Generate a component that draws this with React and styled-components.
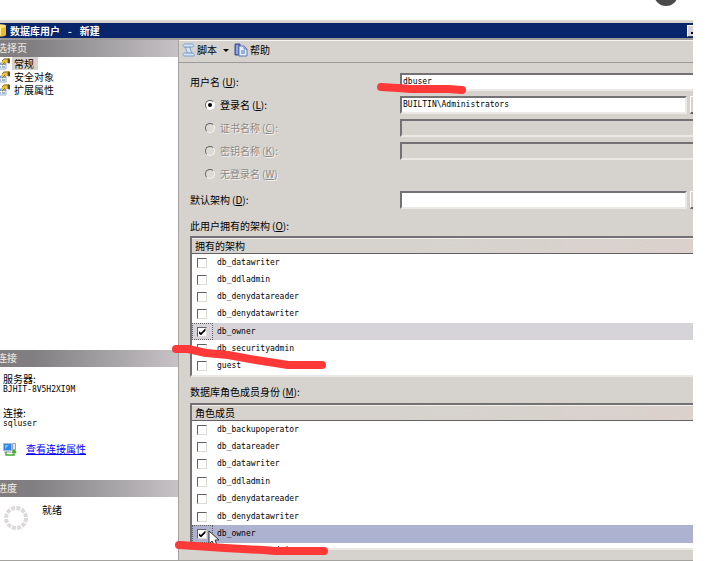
import React from "react";
import styled, { createGlobalStyle } from "styled-components";

const GlobalStyle = createGlobalStyle`
	* {
		box-sizing: border-box;
	}
	body {
		margin: 0;
		background: #fff;
		color: #000;
		font-family: "Noto Sans CJK SC", sans-serif;
		font-size: 10px;
		line-height: 14px;
	}
	input, button {
		margin: 0;
		padding: 0;
		border-radius: 0;
	}
`;

const Page = styled.div`
	position: relative;
	overflow: hidden;
	padding: 20px 16px 0 0;
`;

const Bubble = styled.div`
	position: absolute;
	top: -18px;
	right: 31px;
	width: 24px;
	height: 24px;
	border-radius: 50%;
	background: #4a4a4a;
`;

const Frame = styled.div`
	overflow: hidden;
`;

const Dialog = styled.div`
	margin: 0 -20px 0 -4px;
	background: #d6d3ce;
	border-top: 1px solid #dedcd8;
`;

const TitleBar = styled.header`
	display: flex;
	align-items: center;
	height: 17px;
	margin-top: 2px;
	padding-right: 8px;
	background: #08246b;
	border-bottom: 2px solid #9c9a98;
	color: #fff;
	font-weight: 700;
`;

const TitleText = styled.h1`
	flex: 1;
	margin: 0 0 0 4px;
	font-size: 10px;
	line-height: 14px;
`;

const Dash = styled.span`
	padding: 0 8px;
`;

const MinButton = styled.button`
	display: flex;
	align-items: flex-end;
	width: 18px;
	height: 12px;
	padding: 0 0 2px 3px;
	background: #d6d3ce;
	border: 1px solid #fff;
	border-right-color: #424142;
	border-bottom-color: #424142;
	&::before {
		content: "";
		width: 6px;
		height: 2px;
		background: #000;
	}
`;

const Body = styled.div`
	display: flex;
	align-items: stretch;
	border-bottom: 1px solid #a5a3a0;
`;

const Side = styled.aside`
	flex: none;
	display: flex;
	flex-direction: column;
	width: 182px;
	background: #fff;
`;

const SideHead = styled.h2`
	height: 17px;
	margin: 0;
	padding: 1px 0 0 1px;
	background: linear-gradient(to right, #807e80 20%, #c6c2c6);
	color: #e4e0da;
	font-size: 10px;
	line-height: 14px;
	font-weight: 500;
`;

const PageList = styled.ul`
	height: 293px;
	margin: 0;
	padding: 0;
	list-style: none;
`;

const PageItem = styled.li`
	display: flex;
	align-items: center;
	gap: 2px;
	height: 13px;
`;

const PageName = styled.span`
	height: 13px;
	padding: 0 4px 0 2px;
	line-height: 13px;
	background: ${(props) => (props.$active ? "#d6d3ce" : "transparent")};
`;

const ConnBox = styled.div`
	height: 113px;
	padding: 6px 0 0 7px;
`;

const ConnItem = styled.div`
	height: 34px;
	line-height: 12px;
`;

const ConnValue = styled.span`
	display: block;
	font-family: "DejaVu Sans Mono", monospace;
	font-size: 8px;
	line-height: 9px;
`;

const ConnLink = styled.div`
	display: flex;
	align-items: center;
	gap: 9px;
	height: 16px;
	a {
		color: #0000ff;
	}
`;

const Progress = styled.div`
	display: flex;
	gap: 13px;
	flex: 1;
	padding: 6px 0 0 7px;
`;

const Main = styled.main`
	flex: 1;
	min-width: 0;
	border-left: 1px solid #a5a2a0;
`;

const Toolbar = styled.div`
	display: flex;
	align-items: center;
	height: 23px;
	padding: 0 0 3px 3px;
	border-top: 1px solid #f7f5f2;
	border-bottom: 1px solid #9c9a98;
`;

const ToolButton = styled.button`
	display: flex;
	align-items: center;
	gap: 2px;
	margin-right: 5px;
	background: none;
	border: 0;
	color: #000;
	font: inherit;
`;

const Arrow = styled.span`
	margin-left: 4px;
	border: 3px solid transparent;
	border-top-color: #000;
	border-bottom: 0;
`;

const Form = styled.form`
	padding: 10px 0 10px 11px;
`;

const Field = styled.div`
	display: flex;
	align-items: center;
	height: 18px;
	margin: ${(props) => (props.$last ? "8px 0 0" : "0 0 5px")};
`;

const FieldLabel = styled.label`
	flex: none;
	display: flex;
	align-items: center;
	gap: 5px;
	width: 210px;
	padding-left: ${(props) => (props.$indent ? "15px" : "0")};
	color: ${(props) => (props.$disabled ? "#8c8a88" : "#000")};
	text-shadow: ${(props) => (props.$disabled ? "1px 1px 0 #f4f2ee" : "none")};
`;

const Hotkey = styled.span`
	margin-left: 2px;
	u {
		text-underline-offset: 1px;
	}
`;

const Radio = styled.input`
	appearance: none;
	display: flex;
	align-items: center;
	justify-content: center;
	width: 10px;
	height: 10px;
	border: 1px solid;
	border-color: #636163 #f7f5f2 #f7f5f2 #636163;
	border-radius: 50%;
	background: ${(props) => (props.disabled ? "#dedad6" : "#fff")};
	&:checked::before {
		content: "";
		width: 4px;
		height: 4px;
		border-radius: 50%;
		background: #000;
	}
`;

const TextBox = styled.input`
	flex: 1;
	min-width: 0;
	height: 18px;
	padding: 0 0 2px 1px;
	background: #fff;
	border: 2px solid;
	border-color: #737173 #ebe9e5 #ebe9e5 #737173;
	color: #000;
	font-family: "DejaVu Sans Mono", monospace;
	font-size: 8px;
	&:disabled {
		background: #d6d3ce;
	}
`;

const Browse = styled.button`
	width: 20px;
	height: 18px;
	margin-left: 3px;
	margin-right: 3px;
	background: #d6d3ce;
	border: 1px solid #fff;
	border-bottom: 2px solid #636163;
	border-right-color: #636163;
`;

const ListLabel = styled.div`
	height: 14px;
	margin: ${(props) => (props.$next ? "8px 0 4px" : "10px 0 3px")};
`;

const ListBox = styled.div`
	height: ${(props) => props.$height};
	overflow: hidden;
	background: #fff;
	border: 2px solid;
	border-color: #737173 #ebe9e5 #ebe9e5 #737173;
	border-right: 0;
`;

const Grid = styled.table`
	width: 100%;
	height: ${(props) => props.$height};
	border-collapse: separate;
	border-spacing: 0;
	th {
		height: 16px;
		padding: 0 0 0 3px;
		background: linear-gradient(to right, #d6d3ce 40%, #dbd1cd);
		border-top: 1px solid #f2f0ec;
		border-bottom: 1px solid #636163;
		font-weight: 400;
		line-height: 14px;
		text-align: left;
	}
	td {
		padding: 0;
		line-height: 14px;
	}
`;

const Row = styled.tr`
	background: ${(props) => props.$tone || "#fff"};
`;

const TickCell = styled.td`
	width: 21px;
	outline: ${(props) => (props.$focus ? "1px dotted #636163" : "none")};
	outline-offset: -1px;
`;

const Tick = styled.input`
	appearance: none;
	display: flex;
	align-items: center;
	justify-content: center;
	width: 10px;
	height: 10px;
	margin-left: 5px;
	background: #fff;
	border: 1px solid;
	border-color: #636163 #dedad6 #dedad6 #636163;
	&:checked::before {
		content: "";
		width: 7px;
		height: 7px;
		background: #000;
		clip-path: polygon(0 35%, 35% 65%, 100% 0, 100% 35%, 35% 100%, 0 70%);
	}
`;

const RowName = styled.label`
	display: block;
	padding-left: 4px;
	font-family: "DejaVu Sans Mono", monospace;
	font-size: 8px;
`;

const Marks = styled.svg`
	position: absolute;
	top: 0;
	left: 0;
	pointer-events: none;
`;

const PropIcon = () => (
	<svg width="14" height="13" viewBox="0 0 14 13">
		<path d="M2 6h8v6H2z" fill="#eef4fb" stroke="#9db4d0" />
		<path d="M2 6h8v2H2z" fill="#6f9fdc" />
		<path d="M3 10h2M6 10h3" stroke="#5a7aaa" />
		<path d="M5 6l2-4 6-1v5l-4 0-3 3z" fill="#eec23c" />
		<path d="M6 4l2-2h5" fill="none" stroke="#8a7430" />
		<path d="M6 8l3-3M12 2h2v4h-2z" fill="#4a4a4a" stroke="#6a5a30" strokeWidth=".7" />
	</svg>
);

const ScriptIcon = () => (
	<svg width="13" height="14" viewBox="0 0 13 14">
		<path d="M3 1h7c2 0 2 3 0 3H8c0 3 1 4 2 6 2 0 3 1 2 3H3c-3 0-3-3 0-3h2C5 8 4 6 3 4 0 4 1 1 3 1z" fill="#d7e7fb" stroke="#7c9cca" />
		<path d="M3 4h5M5 10h5" stroke="#6586b8" />
	</svg>
);

const HelpIcon = () => (
	<svg width="14" height="14" viewBox="0 0 14 14">
		<path d="M1 1h5v11H1z" fill="#5a72bd" stroke="#3a4f95" />
		<path d="M3 2v9" stroke="#c4d2f4" />
		<path d="M5 3h5l3 3v7H5z" fill="#e5eefc" stroke="#5a78b4" />
		<path d="M10 3v3h3" fill="none" stroke="#5a78b4" />
		<path d="M7 8h4M7 10h4" stroke="#4d70b5" />
	</svg>
);

const DbIcon = () => (
	<svg width="10" height="13" viewBox="0 0 10 13">
		<path d="M0 2v9c2 2 8 2 10 0V2z" fill="#f2b824" />
		<path d="M2 3v8.500h3V3z" fill="#fff0a8" />
		<ellipse cx="5" cy="2" rx="5" ry="1.800" fill="#ffe27a" />
	</svg>
);

const LinkIcon = () => (
	<svg width="14" height="14" viewBox="0 0 14 14">
		<rect x=".5" y="1.500" width="8" height="7" fill="#2f86ea" stroke="#a6bcd8" />
		<path d="M2 3h4L2 7z" fill="#84c0ff" />
		<path d="M9.500 1.500h3v7h-3z" fill="#e4e4e4" stroke="#9aa4b0" />
		<path d="M1 10h7" stroke="#8090a8" />
		<path d="M3 10v3h8V9M9 11l2-3 2 3" fill="none" stroke="#42a832" strokeWidth="1.400" />
	</svg>
);

const Spinner = () => (
	<svg width="26" height="28" viewBox="0 0 26 28">
		<circle cx="13" cy="15" r="10" fill="none" stroke="#dcd8dc" strokeWidth="4" strokeDasharray="4 1.236" />
	</svg>
);

const pages = ["常规", "安全对象", "扩展属性"];

const schemas = [
	"db_datawriter",
	"db_ddladmin",
	"db_denydatareader",
	"db_denydatawriter",
	"db_owner",
	"db_securityadmin",
	"guest",
];

const roles = [
	"db_backupoperator",
	"db_datareader",
	"db_datawriter",
	"db_ddladmin",
	"db_denydatareader",
	"db_denydatawriter",
	"db_owner",
	"db_securityadmin",
];

const Key = ({ letter, colon = true }) => (
	<Hotkey>
		(<u>{letter}</u>){colon && ":"}
	</Hotkey>
);

const RadioField = ({ id, text, letter, colon, disabled, children }) => (
	<Field>
		<FieldLabel $indent $disabled={disabled}>
			<Radio type="radio" name="kind" id={id} defaultChecked={!disabled} disabled={disabled} />
			<span>
				{text}
				<Key letter={letter} colon={colon} />
			</span>
		</FieldLabel>
		{children}
	</Field>
);

const CheckList = ({ prefix, title, names, tone, boxHeight, height }) => (
	<ListBox $height={boxHeight}>
		<Grid $height={height}>
			<thead>
				<tr>
					<th colSpan={2}>{title}</th>
				</tr>
			</thead>
			<tbody>
				{names.map((name) => {
					const on = name === "db_owner";
					return (
						<Row key={name} $tone={on && tone}>
							<TickCell $focus={on}>
								<Tick type="checkbox" id={`${prefix}-${name}`} defaultChecked={on} />
							</TickCell>
							<td>
								<RowName htmlFor={`${prefix}-${name}`}>{name}</RowName>
							</td>
						</Row>
					);
				})}
			</tbody>
		</Grid>
	</ListBox>
);

export default () => {
	return (
		<Page lang="zh-CN">
			<GlobalStyle />
			<Bubble />
			<Frame>
				<Dialog>
					<TitleBar>
						<DbIcon />
						<TitleText>
							数据库用户<Dash>-</Dash>新建
						</TitleText>
						<MinButton type="button" />
					</TitleBar>
					<Body>
						<Side>
							<SideHead>选择页</SideHead>
							<PageList>
								{pages.map((name, i) => (
									<PageItem key={name}>
										<PropIcon />
										<PageName $active={i === 0}>{name}</PageName>
									</PageItem>
								))}
							</PageList>
							<SideHead>连接</SideHead>
							<ConnBox>
								<ConnItem>
									服务器:
									<ConnValue>BJHIT-8V5H2XI9M</ConnValue>
								</ConnItem>
								<ConnItem>
									连接:
									<ConnValue>sqluser</ConnValue>
								</ConnItem>
								<ConnLink>
									<LinkIcon />
									<a href="#connection">查看连接属性</a>
								</ConnLink>
							</ConnBox>
							<SideHead>进度</SideHead>
							<Progress>
								<Spinner />
								<span>就绪</span>
							</Progress>
						</Side>
						<Main>
							<Toolbar>
								<ToolButton type="button">
									<ScriptIcon />
									脚本
									<Arrow />
								</ToolButton>
								<ToolButton type="button">
									<HelpIcon />
									帮助
								</ToolButton>
							</Toolbar>
							<Form>
								<Field>
									<FieldLabel htmlFor="user">
										<span>
											用户名
											<Key letter="U" />
										</span>
									</FieldLabel>
									<TextBox id="user" defaultValue="dbuser" />
								</Field>
								<RadioField id="login" text="登录名" letter="L">
									<TextBox aria-label="登录名" defaultValue="BUILTIN\Administrators" />
									<Browse type="button" />
								</RadioField>
								<RadioField id="cert" text="证书名称" letter="C" disabled>
									<TextBox aria-label="证书名称" disabled />
								</RadioField>
								<RadioField id="key" text="密钥名称" letter="K" disabled>
									<TextBox aria-label="密钥名称" disabled />
								</RadioField>
								<RadioField id="none" text="无登录名" letter="W" colon={false} disabled />
								<Field $last>
									<FieldLabel htmlFor="schema">
										<span>
											默认架构
											<Key letter="D" />
										</span>
									</FieldLabel>
									<TextBox id="schema" />
									<Browse type="button" />
								</Field>
								<ListLabel>
									此用户拥有的架构
									<Key letter="O" />
								</ListLabel>
								<CheckList
									prefix="schema"
									title="拥有的架构"
									names={schemas}
									tone="#d6d4d8"
									boxHeight="141px"
									height="137px"
								/>
								<ListLabel $next>
									数据库角色成员身份
									<Key letter="M" />
								</ListLabel>
								<CheckList
									prefix="role"
									title="角色成员"
									names={roles}
									tone="#adb2d0"
									boxHeight="147px"
									height="155px"
								/>
							</Form>
						</Main>
					</Body>
				</Dialog>
			</Frame>
			<Marks width="700" height="561" viewBox="0 0 700 561">
				<path d="M209 531v13l3-3 3 5 2-1-2-5h4z" fill="#fff" stroke="#333" />
				<g fill="none" stroke="#ff3838" strokeWidth="8" strokeLinecap="round" strokeLinejoin="round">
					<path d="M381 87l17 1 12 1h38l14 1" />
					<path d="M176 349h12l18 4 22 2 28 5 32 5h34" />
					<path d="M179 545l16 1 30 2 38 2 12 1h49" />
				</g>
			</Marks>
		</Page>
	);
};
